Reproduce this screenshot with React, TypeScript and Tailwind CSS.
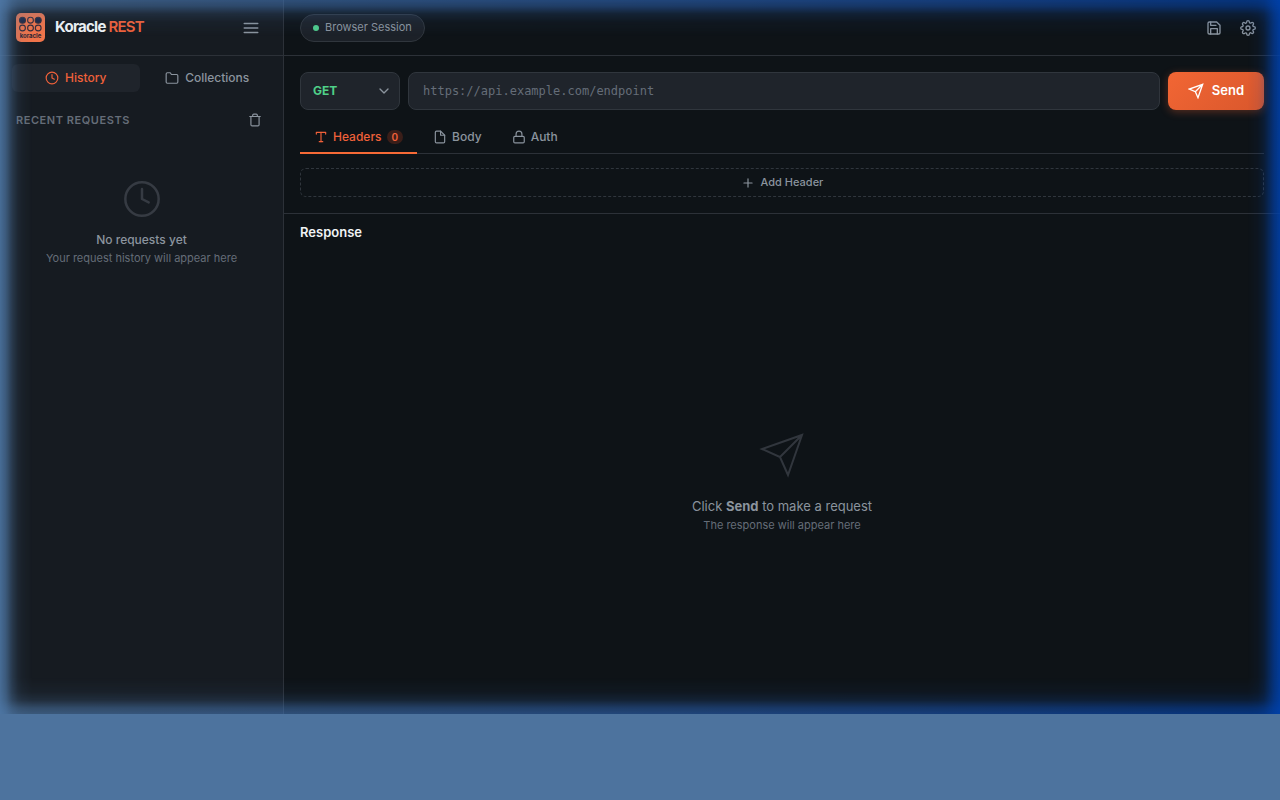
import type { ReactNode } from "react";
import {
  FiChevronDown,
  FiClock,
  FiFile,
  FiFolder,
  FiLock,
  FiMenu,
  FiPlus,
  FiSave,
  FiSettings,
  FiTrash,
  FiType,
} from "react-icons/fi";

function SendIcon({ size, strokeWidth }: { size: number; strokeWidth: number }) {
  return (
    <svg
      width={size}
      height={size}
      viewBox="0 0 24 24"
      fill="none"
      stroke="currentColor"
      strokeWidth={strokeWidth}
      aria-hidden="true"
    >
      <path d="M22 2 11 13M22 2l-7 20-4-9-9-4 20-7z" />
    </svg>
  );
}

function Logo() {
  return (
    <svg width="29" height="29" viewBox="0 0 29 29" aria-hidden="true">
      <rect width="29" height="29" rx="5" fill="#f0744a" />
      <g fill="none" stroke="#332b38" strokeWidth="1.1">
        <circle cx="6.5" cy="7.2" r="3" fill="#1b2542" />
        <circle cx="14.5" cy="7.2" r="2.9" />
        <circle cx="22.2" cy="7.2" r="3" fill="#1b2542" />
        <circle cx="6.5" cy="15" r="2.9" />
        <circle cx="14.5" cy="15" r="2.9" />
        <circle cx="22.2" cy="15" r="2.9" />
      </g>
      <text
        x="14.5"
        y="25"
        textAnchor="middle"
        fontFamily="Inter, sans-serif"
        fontSize="6"
        fontWeight="700"
        fill="#2b2433"
      >
        koracle
      </text>
    </svg>
  );
}

function IconButton({ label, children }: { label: string; children: ReactNode }) {
  return (
    <button type="button" aria-label={label} className="flex size-8 items-center justify-center text-[#8b949e]">
      {children}
    </button>
  );
}

function Sidebar() {
  return (
    <aside className="flex w-71 shrink-0 flex-col border-r border-[#2c3138] bg-[#161b21]">
      <div className="flex h-14 items-center justify-between border-b border-[#2c3138] px-4">
        <div className="flex items-center gap-2.5">
          <Logo />
          <h1 className="text-[15px] font-bold tracking-tighter text-[#f0f3f6]">
            Koracle <span className="font-semibold text-[#f0613a]">REST</span>
          </h1>
        </div>
        <IconButton label="Toggle menu">
          <FiMenu size={18} />
        </IconButton>
      </div>
      <div role="tablist" className="flex gap-1 px-3 py-2">
        <button
          type="button"
          role="tab"
          aria-selected="true"
          className="flex h-7 flex-1 items-center justify-center gap-1.5 rounded-md bg-[#1f242b] text-[12px] font-medium text-[#f0613a]"
        >
          <FiClock size={14} />
          History
        </button>
        <button
          type="button"
          role="tab"
          aria-selected="false"
          className="flex h-7 flex-1 items-center justify-center gap-1.5 rounded-md text-[12px] font-medium text-[#8b949e]"
        >
          <FiFolder size={14} />
          Collections
        </button>
      </div>
      <div className="flex items-center justify-between py-1 pr-3 pl-4">
        <h2 className="text-[11px] font-semibold tracking-wider text-[#656d78]">RECENT REQUESTS</h2>
        <IconButton label="Clear history">
          <FiTrash size={14} />
        </IconButton>
      </div>
      <div className="flex flex-col items-center pt-[39px] text-center">
        <FiClock size={40} strokeWidth={1.5} className="text-[#363b43]" />
        <p className="mt-[11px] text-[12px] leading-5 font-medium text-[#8b949e]">No requests yet</p>
        <p className="text-[11px] leading-4 text-[#656d78]">Your request history will appear here</p>
      </div>
    </aside>
  );
}

function Topbar() {
  return (
    <header className="flex h-14 items-center justify-between border-b border-[#2c3138] px-4">
      <div className="flex h-7 items-center gap-1.5 rounded-full border border-[#30363d] bg-[#1c2128] px-3 text-[11px] text-[#8b949e]">
        <span className="size-1.5 rounded-full bg-[#4fcb8b]" />
        Browser Session
      </div>
      <div className="flex gap-0.5">
        <IconButton label="Save request">
          <FiSave size={16} />
        </IconButton>
        <IconButton label="Settings">
          <FiSettings size={16} />
        </IconButton>
      </div>
    </header>
  );
}

function RequestPanel() {
  return (
    <section className="border-b border-[#2c3138] p-4">
      <form className="flex gap-2">
        <div className="relative">
          <select
            aria-label="Method"
            className="h-[38px] w-[100px] appearance-none rounded-lg border border-[#30363d] bg-[#1f242b] px-3 text-[12px] font-bold text-[#4fd088]"
          >
            <option>GET</option>
            <option>POST</option>
            <option>PUT</option>
            <option>PATCH</option>
            <option>DELETE</option>
          </select>
          <FiChevronDown size={16} className="pointer-events-none absolute top-[11px] right-2 text-[#8b949e]" />
        </div>
        <input
          type="text"
          aria-label="Request URL"
          placeholder="https://api.example.com/endpoint"
          className="h-[38px] min-w-0 flex-1 rounded-lg border border-[#30363d] bg-[#1f242b] px-3.5 font-['DejaVu_Sans_Mono',monospace] text-[12px] text-[#e6edf3] placeholder:text-[#656d78]"
        />
        <button
          type="button"
          className="flex h-[38px] items-center gap-2 rounded-lg bg-linear-135 from-[#f26634] to-[#d9572c] px-5 text-[13px] font-semibold text-white shadow-[0_2px_8px_#ff6b354d]"
        >
          <SendIcon size={16} strokeWidth={2} />
          Send
        </button>
      </form>
      <div
        role="tablist"
        className="mt-[11px] flex border-b border-[#2c3138] text-[12px] font-medium text-[#8b949e]"
      >
        <button
          type="button"
          role="tab"
          aria-selected="true"
          className="-mb-px flex h-[33px] items-center gap-[5px] border-b-2 border-[#f76a36] px-3.5 text-[#f0613a]"
        >
          <FiType size={14} />
          Headers
          <span className="rounded-full bg-[#3a1e19] px-[5px] text-[10px] leading-3.5 font-semibold">0</span>
        </button>
        <button type="button" role="tab" aria-selected="false" className="flex h-8 items-center gap-[5px] px-4">
          <FiFile size={14} />
          Body
        </button>
        <button type="button" role="tab" aria-selected="false" className="flex h-8 items-center gap-[5px] px-3.5">
          <FiLock size={14} />
          Auth
        </button>
      </div>
      <button
        type="button"
        className="mt-3.5 flex h-[29px] w-full items-center justify-center gap-1.5 rounded-md border border-dashed border-[#30363d] text-[11px] font-medium text-[#8b949e]"
      >
        <FiPlus size={14} />
        Add Header
      </button>
    </section>
  );
}

function ResponsePanel() {
  return (
    <section className="flex flex-1 flex-col">
      <h2 className="px-4 pt-2 text-[13px] leading-5 font-semibold text-[#f0f3f6]">Response</h2>
      <div className="flex flex-1 flex-col items-center justify-center pt-2 text-center text-[#31363d]">
        <SendIcon size={48} strokeWidth={1} />
        <p className="mt-[17px] text-[13px] leading-5 text-[#8b949e]">
          Click <strong className="font-bold">Send</strong> to make a request
        </p>
        <p className="text-[11px] leading-[18px] text-[#656d78]">The response will appear here</p>
      </div>
    </section>
  );
}

function EdgeGlow() {
  return (
    <div className="pointer-events-none absolute inset-0 bg-linear-to-r from-[#4f79a8] to-[#0042ae] [mask-image:linear-gradient(to_right,#000d,#000a_6px,#0005_12px,#0002_18px,#0001_22px,#0000_32px,#0000_calc(100%-32px),#0001_calc(100%-22px),#0003_calc(100%-16px),#000a_calc(100%-6px),#000d),linear-gradient(to_bottom,#000a,#0008_6px,#0003_14px,#0001_22px,#0000_36px,#0000_calc(100%-36px),#0001_calc(100%-22px),#0003_calc(100%-14px),#0008_calc(100%-6px),#000a)]" />
  );
}

export default function App() {
  return (
    <div className="flex min-h-screen flex-col bg-[#4d739e] font-[Inter,sans-serif]">
      <div className="relative flex flex-1 bg-[#0e1317]">
        <Sidebar />
        <main className="flex min-w-0 flex-1 flex-col">
          <Topbar />
          <RequestPanel />
          <ResponsePanel />
        </main>
        <EdgeGlow />
      </div>
      <div className="h-[86px]" />
    </div>
  );
}
